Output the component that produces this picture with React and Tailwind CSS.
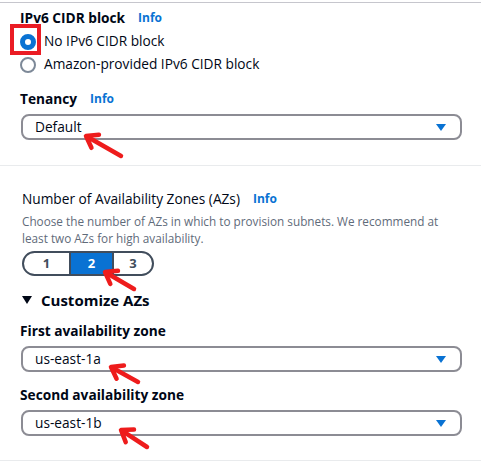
import React from "react";

// Red annotation arrow: tip at (x1,y1), tail at (x2,y2)
const Arrow = ({ x1, y1, x2, y2 }) => {
  const dx = x2 - x1;
  const dy = y2 - y1;
  const len = Math.hypot(dx, dy);
  const ux = dx / len;
  const uy = dy / len;
  const arm = 13;
  const rot = (a) => {
    const c = Math.cos(a);
    const s = Math.sin(a);
    return [x1 + arm * (ux * c - uy * s), y1 + arm * (ux * s + uy * c)];
  };
  const [ax, ay] = rot(0.62);
  const [bx, by] = rot(-0.62);
  return (
    <g stroke="#ee1c1c" strokeWidth="4.5" strokeLinecap="round" strokeLinejoin="round" fill="none">
      <line x1={x1 + ux * 2} y1={y1 + uy * 2} x2={x2} y2={y2} />
      <polyline points={`${ax},${ay} ${x1},${y1} ${bx},${by}`} />
    </g>
  );
};

const Info = () => (
  <span className="text-[12px] font-bold text-[#0972d3]">Info</span>
);

const Caret = () => (
  <svg width="10" height="7" viewBox="0 0 10 7" className="mr-[14px]">
    <polygon points="0,0 10,0 5,7" fill="#0972d3" />
  </svg>
);

const Select = ({ value }) => (
  <div className="flex h-[26px] w-[441px] items-center justify-between rounded-lg border-2 border-[#8c8c94] pl-3 text-[13.7px] text-[#000716]">
    <span>{value}</span>
    <Caret />
  </div>
);

const Radio = ({ checked, label }) => (
  <div className="flex h-[23px] items-center gap-2">
    {checked ? (
      <span className="h-4 w-4 rounded-full border-[5px] border-[#0972d3] bg-white" />
    ) : (
      <span className="h-4 w-4 rounded-full border-2 border-[#7d8998] bg-white" />
    )}
    <span className="text-[13.7px] text-[#000716]">{label}</span>
  </div>
);

export default function App() {
  return (
    <div className="relative h-[462px] w-[481px] overflow-hidden bg-white font-['Open_Sans',sans-serif] text-[#000716]">
      <div className="h-[2px]" />
      <div className="h-px bg-[#c6c6cd]" />

      {/* IPv6 + tenancy */}
      <div className="pl-5">
        <div className="mt-[5px] flex h-5 items-center gap-[13px]">
          <span className="text-[13.7px] font-bold">IPv6 CIDR block</span>
          <Info />
        </div>
        <div className="mt-[2px]">
          <Radio checked label="No IPv6 CIDR block" />
          <Radio label="Amazon-provided IPv6 CIDR block" />
        </div>
        <div className="mt-[13px] flex h-5 items-center gap-[13px]">
          <span className="text-[13.7px] font-bold">Tenancy</span>
          <Info />
        </div>
        <div className="ml-px mt-[5px]">
          <Select value="Default" />
        </div>
      </div>

      <div className="mt-[25px] h-px bg-[#e9ebed]" />

      {/* Availability zones */}
      <div className="pl-[22px]">
        <div className="mt-[23px] flex h-5 items-center gap-[13px]">
          <span className="text-[13.7px]">Number of Availability Zones (AZs)</span>
          <Info />
        </div>
        <p className="mt-1 text-[11.75px] leading-[16.5px] text-[#5f6b7a]">
          Choose the number of AZs in which to provision subnets. We recommend at
          <br />
          least two AZs for high availability.
        </p>
        <div className="mt-[5px] flex h-[25px] w-[132px] overflow-hidden rounded-full border-2 border-[#414d5c] text-[13px] font-bold">
          <div className="flex w-[45px] items-center justify-center text-[#414d5c]">1</div>
          <div className="flex w-[45px] items-center justify-center border-x-2 border-[#414d5c] bg-[#0972d3] text-white">2</div>
          <div className="flex flex-1 items-center justify-center text-[#414d5c]">3</div>
        </div>
        <div className="mt-[14px] flex h-5 items-center gap-[9px]">
          <svg width="10" height="8" viewBox="0 0 10 8">
            <polygon points="0,0 10,0 5,8" fill="#000716" />
          </svg>
          <span className="text-[15px] font-bold">Customize AZs</span>
        </div>
      </div>

      <div className="pl-5">
        <div className="mt-[11px] flex h-5 items-center">
          <span className="text-[13.7px] font-bold">First availability zone</span>
        </div>
        <div className="ml-px mt-[5px]">
          <Select value="us-east-1a" />
        </div>
        <div className="mt-[13px] flex h-5 items-center">
          <span className="text-[13.7px] font-bold">Second availability zone</span>
        </div>
        <div className="ml-px mt-[5px]">
          <Select value="us-east-1b" />
        </div>
      </div>

      <div className="absolute bottom-px left-0 right-0 h-px bg-[#e9ebed]" />

      {/* Annotations */}
      <div className="absolute left-[10px] top-[24px] h-[31px] w-[31px] border-4 border-[#ea1c24]" />
      <svg className="pointer-events-none absolute inset-0" width="481" height="462">
        <Arrow x1={86} y1={136} x2={121} y2={156} />
        <Arrow x1={105} y1={272} x2={134} y2={289} />
        <Arrow x1={111} y1={367} x2={138} y2={382} />
        <Arrow x1={121} y1={430} x2={147} y2={447} />
      </svg>
    </div>
  );
}
